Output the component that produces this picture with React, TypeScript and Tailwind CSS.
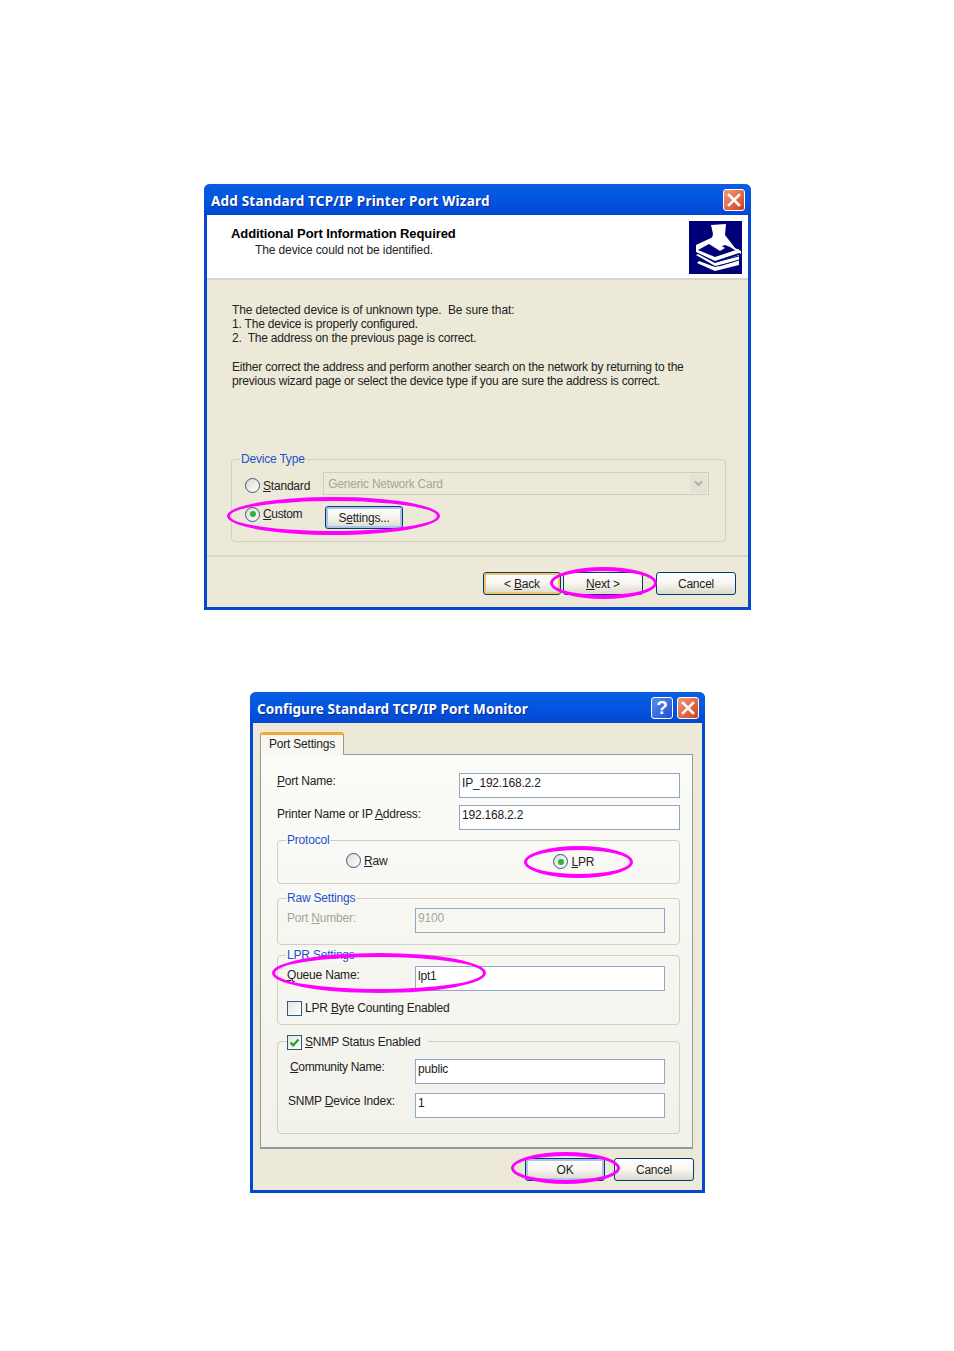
const uiFont = "font-['Liberation_Sans',Arial,sans-serif] text-[12px] tracking-[-0.2px] text-[#222]";
const titleFont = "font-['Noto_Sans',sans-serif] text-[13.5px] font-bold text-white";
const ellipse = "pointer-events-none absolute rounded-[50%] border-x-[3px] border-y-[4px] border-[#f0f]";

function TitleBar({ title, help }: { title: string; help?: boolean }) {
  return (
    <div className="flex h-[31px] items-center rounded-t-[6px] bg-gradient-to-b from-[#0a5ee0] via-[#0355e2] to-[#0348cf] pl-[7px] pr-[6px]">
      <span className={titleFont + (help ? " tracking-[0.07px]" : " tracking-[0.2px]") + " pt-[3px] [text-shadow:1px_1px_0_#0a2f90]"}>{title}</span>
      <div className="ml-auto flex gap-[4px]">
        {help && (
          <div className="flex h-[22px] w-[22px] items-center justify-center rounded-[3px] border border-white bg-gradient-to-br from-[#5f8df0] to-[#1c4fd0]">
            <span className="font-['Liberation_Sans',sans-serif] text-[19px] font-bold leading-none text-white">?</span>
          </div>
        )}
        <div className="flex h-[22px] w-[22px] items-center justify-center rounded-[3px] border border-white bg-gradient-to-br from-[#ee9a7c] to-[#cf3a12]">
          <svg width="14" height="14" viewBox="0 0 14 14">
            <path d="M2 2 L12 12 M12 2 L2 12" stroke="#fff" strokeWidth="2.6" strokeLinecap="square" />
          </svg>
        </div>
      </div>
    </div>
  );
}

function PrinterIcon() {
  return (
    <svg width="53" height="53" viewBox="0 0 53 53" className="block">
      <defs>
        <pattern id="dither" width="2" height="2" patternUnits="userSpaceOnUse">
          <rect width="2" height="2" fill="#0000a8" />
          <rect width="1" height="1" fill="#00004a" />
          <rect x="1" y="1" width="1" height="1" fill="#00004a" />
        </pattern>
      </defs>
      <rect width="53" height="53" fill="url(#dither)" />
      <path d="M22 4 L37 3 L36 14 L46 27 L52 30 L52 33 L41 26 L36 24 L30 26 L22 21 L24 13 Z" fill="#fff" />
      <path d="M7 24 L24 16 L28 22 L36 27 L31 30 L20 23 L9 29 L26 36 L50 28 L50 32 L26 40 L7 31 Z" fill="#fff" />
      <path d="M7 34 L9 33 L26 42 L50 34 L50 37 L50 44 L26 50 L8 42 L10 40 L26 46 L48 40 L26 45 Z" fill="#fff" />
      <path d="M30 40 L50 35 M30 45 L50 39" stroke="#000a70" strokeWidth="1" />
    </svg>
  );
}

function Button({ children, className = "w-[80px]" }: { children: React.ReactNode; className?: string }) {
  return (
    <div className={"flex h-[23px] items-center justify-center rounded-[3px] border border-[#003c74] bg-gradient-to-b from-white via-[#f6f5ef] to-[#dcd8cc] " + className}>
      {children}
    </div>
  );
}

function Radio({ checked }: { checked?: boolean }) {
  return (
    <div className="flex h-[15px] w-[15px] shrink-0 items-center justify-center rounded-full border border-[#2f5a82] bg-gradient-to-br from-[#dcdcd4] to-white">
      {checked && <div className="h-[6px] w-[6px] rounded-full bg-[#35ad3c]" />}
    </div>
  );
}

function Check({ checked }: { checked?: boolean }) {
  return (
    <div className="flex h-[15px] w-[15px] shrink-0 items-center justify-center border border-[#2f5a82] bg-gradient-to-br from-[#e4e3dc] to-white">
      {checked && (
        <svg width="11" height="11" viewBox="0 0 11 11">
          <path d="M1.5 5.5 L4.2 8.3 L9.5 2.5" fill="none" stroke="#21a121" strokeWidth="2.2" />
        </svg>
      )}
    </div>
  );
}

function Field({ value, width, disabled }: { value: string; width: string; disabled?: boolean }) {
  return (
    <div className={`flex h-[25px] ${width} items-center border border-[#8fa8c4] pb-[5px] pl-[2px] ${disabled ? "text-[#a6a596]" : "bg-white"}`}>
      {value}
    </div>
  );
}

function Group({ className, children }: { className: string; children: React.ReactNode }) {
  return <div className={"relative rounded-[4px] border border-[#d0d0bf] " + className}>{children}</div>;
}

function Legend({ children, bg }: { children: React.ReactNode; bg: string }) {
  return <span className={`absolute left-[8px] top-[-8px] px-[1px] leading-[14px] text-[#1f52c8] ${bg}`}>{children}</span>;
}

function WizardWindow() {
  return (
    <div className="relative ml-[204px] w-[547px] rounded-t-[6px] border-x-[3px] border-b-[3px] border-[#0348cf]">
      <div className="mx-[-3px]">
        <TitleBar title="Add Standard TCP/IP Printer Port Wizard" />
      </div>
      <div className={uiFont + " bg-[#ece9d8]"}>
        <div className="flex h-[65px] border-b-2 border-[#d9d6c8] bg-white pl-[24px] pr-[6px] pt-[6px]">
          <div>
            <div className="mt-[5px] text-[13px] font-bold leading-[15px] tracking-[-0.1px] text-black">Additional Port Information Required</div>
            <div className="ml-[24px] mt-[2px] leading-[14px] tracking-[-0.12px]">The device could not be identified.</div>
          </div>
          <div className="ml-auto">
            <PrinterIcon />
          </div>
        </div>
        <div className="h-[277px] border-b-2 border-[#d9d6c8] pl-[25px] pr-[22px] pt-[23px]">
          <div className="whitespace-pre leading-[14px]">
            <span className="tracking-[-0.12px]">The detected device is of unknown type.  Be sure that:</span>
            {"\n1. The device is properly configured.\n2.  The address on the previous page is correct."}
          </div>
          <div className="mt-[15px] leading-[14px] tracking-[-0.22px]">
            Either correct the address and perform another search on the network by returning to the
            <br />
            previous wizard page or select the device type if you are sure the address is correct.
          </div>
          <Group className="ml-[-1px] mt-[71px] h-[83px] w-[495px] pl-[13px] pt-[12px]">
            <Legend bg="bg-[#ece9d8]">Device Type</Legend>
            <div className="flex items-center">
              <div className="mt-[4px] flex items-center gap-[3px]">
                <Radio />
                <span>
                  <u>S</u>tandard
                </span>
              </div>
              <div className="ml-[13px] flex h-[23px] w-[386px] items-center justify-between border border-[#cfcdbd] pl-[4px] pr-[1px] text-[#a6a596]">
                Generic Network Card
                <div className="flex h-[19px] w-[17px] items-center justify-center rounded-[2px] bg-[#e4e2d5]">
                  <svg width="9" height="7" viewBox="0 0 9 7">
                    <path d="M1 1.5 L4.5 5 L8 1.5" fill="none" stroke="#b0aea0" strokeWidth="1.8" />
                  </svg>
                </div>
              </div>
            </div>
            <div className="mt-[10px] flex items-start">
              <div className="flex w-[56px] items-center gap-[3px] tracking-[-0.35px]">
                <Radio checked />
                <span>
                  <u>C</u>ustom
                </span>
              </div>
              <Button className="ml-[24px] mt-[1px] w-[78px] border-[#2f5f9e] shadow-[inset_0_0_0_2px_#a8c4ea]">
                <span>
                  S<u>e</u>ttings...
                </span>
              </Button>
            </div>
          </Group>
        </div>
        <div className="flex h-[50px] justify-end gap-[2px] pr-[12px] pt-[15px]">
          <Button className="w-[78px] shadow-[inset_0_0_0_2px_#f5c468]">
            <span>
              &lt; <u>B</u>ack
            </span>
          </Button>
          <Button>
            <span>
              <u>N</u>ext &gt;
            </span>
          </Button>
          <Button className="ml-[11px] w-[80px]">Cancel</Button>
        </div>
      </div>
      <div className={ellipse + " left-[20px] top-[313px] h-[38px] w-[213px]"} />
      <div className={ellipse + " left-[343px] top-[383px] h-[32px] w-[107px]"} />
    </div>
  );
}

function ConfigWindow() {
  return (
    <div className="relative ml-[250px] mt-[82px] w-[455px] rounded-t-[6px] border-x-[3px] border-b-[3px] border-[#0348cf]">
      <div className="mx-[-3px]">
        <TitleBar title="Configure Standard TCP/IP Port Monitor" help />
      </div>
      <div className={uiFont + " bg-[#ece9d8] pb-[9px] pl-[7px] pr-[8px] pt-[9px]"}>
        <div className="relative z-10 mb-[-1px] flex h-[23px] w-[84px] items-center justify-center rounded-t-[3px] border-x border-t-[3px] border-x-[#919b9c] border-t-[#f2a93b] bg-[#f8f7f2] pb-[3px]">
          Port Settings
        </div>
        <div className="mr-[1px] h-[395px] border border-b-2 border-[#919b9c] bg-gradient-to-b from-[#fbfbf8] to-[#f2f1ea] pl-[16px] pt-[18px]">
          <div className="flex items-start">
            <span className="w-[182px] leading-[17px]">
              <u>P</u>ort Name:
            </span>
            <Field value="IP_192.168.2.2" width="w-[221px]" />
          </div>
          <div className="mt-[7px] flex items-start">
            <span className="mt-[1px] w-[182px] leading-[17px]">
              Printer Name or IP <u>A</u>ddress:
            </span>
            <Field value="192.168.2.2" width="w-[221px]" />
          </div>
          <Group className="mt-[10px] flex h-[44px] w-[403px]">
            <Legend bg="bg-[#fafaf6]">Protocol</Legend>
            <div className="ml-[68px] mt-[12px] flex h-[15px] items-center gap-[3px]">
              <Radio />
              <span>
                <u>R</u>aw
              </span>
            </div>
            <div className="ml-[166px] mt-[13px] flex h-[15px] items-center gap-[3px]">
              <Radio checked />
              <span>
                <u>L</u>PR
              </span>
            </div>
          </Group>
          <Group className="mt-[14px] flex h-[47px] w-[403px] pl-[9px] pt-[9px]">
            <Legend bg="bg-[#f9f9f5]">Raw Settings</Legend>
            <span className="mt-[1px] w-[128px] text-[#a6a596]">
              Port <u>N</u>umber:
            </span>
            <Field value="9100" width="w-[250px]" disabled />
          </Group>
          <Group className="mt-[10px] h-[70px] w-[403px] pl-[9px] pt-[10px]">
            <Legend bg="bg-[#f8f8f4]">LPR Settings</Legend>
            <div className="flex">
              <span className="w-[128px]">
                <u>Q</u>ueue Name:
              </span>
              <Field value="lpt1" width="w-[250px]" />
            </div>
            <div className="mt-[8px] flex items-center gap-[3px]">
              <Check />
              <span>
                LPR <u>B</u>yte Counting Enabled
              </span>
            </div>
          </Group>
          <Group className="mt-[16px] h-[93px] w-[403px] pl-[9px] pt-[17px]">
            <div className="absolute left-[9px] top-[-9px] flex items-center gap-[3px] bg-[#f5f5f0] pr-[8px]">
              <Check checked />
              <span>
                <u>S</u>NMP Status Enabled
              </span>
            </div>
            <div className="flex">
              <span className="ml-[3px] mt-[-1px] w-[125px] tracking-[-0.33px]">
                <u>C</u>ommunity Name:
              </span>
              <Field value="public" width="w-[250px]" />
            </div>
            <div className="mt-[9px] flex">
              <span className="ml-[1px] mt-[-1px] w-[127px]">
                SNMP <u>D</u>evice Index:
              </span>
              <Field value="1" width="w-[250px]" />
            </div>
          </Group>
        </div>
        <div className="mt-[9px] flex justify-end gap-[9px]">
          <Button className="w-[80px] border-[#2f5f9e] shadow-[inset_0_0_0_2px_#a8c4ea]">OK</Button>
          <Button>Cancel</Button>
        </div>
      </div>
      <div className={ellipse + " left-[271px] top-[154px] h-[32px] w-[109px]"} />
      <div className={ellipse + " left-[19px] top-[261px] h-[40px] w-[214px]"} />
      <div className={ellipse + " left-[258px] top-[460px] h-[32px] w-[109px]"} />
    </div>
  );
}

export default function App() {
  return (
    <div className="min-h-[1351px] w-[954px] bg-white pt-[184px]">
      <WizardWindow />
      <ConfigWindow />
    </div>
  );
}
